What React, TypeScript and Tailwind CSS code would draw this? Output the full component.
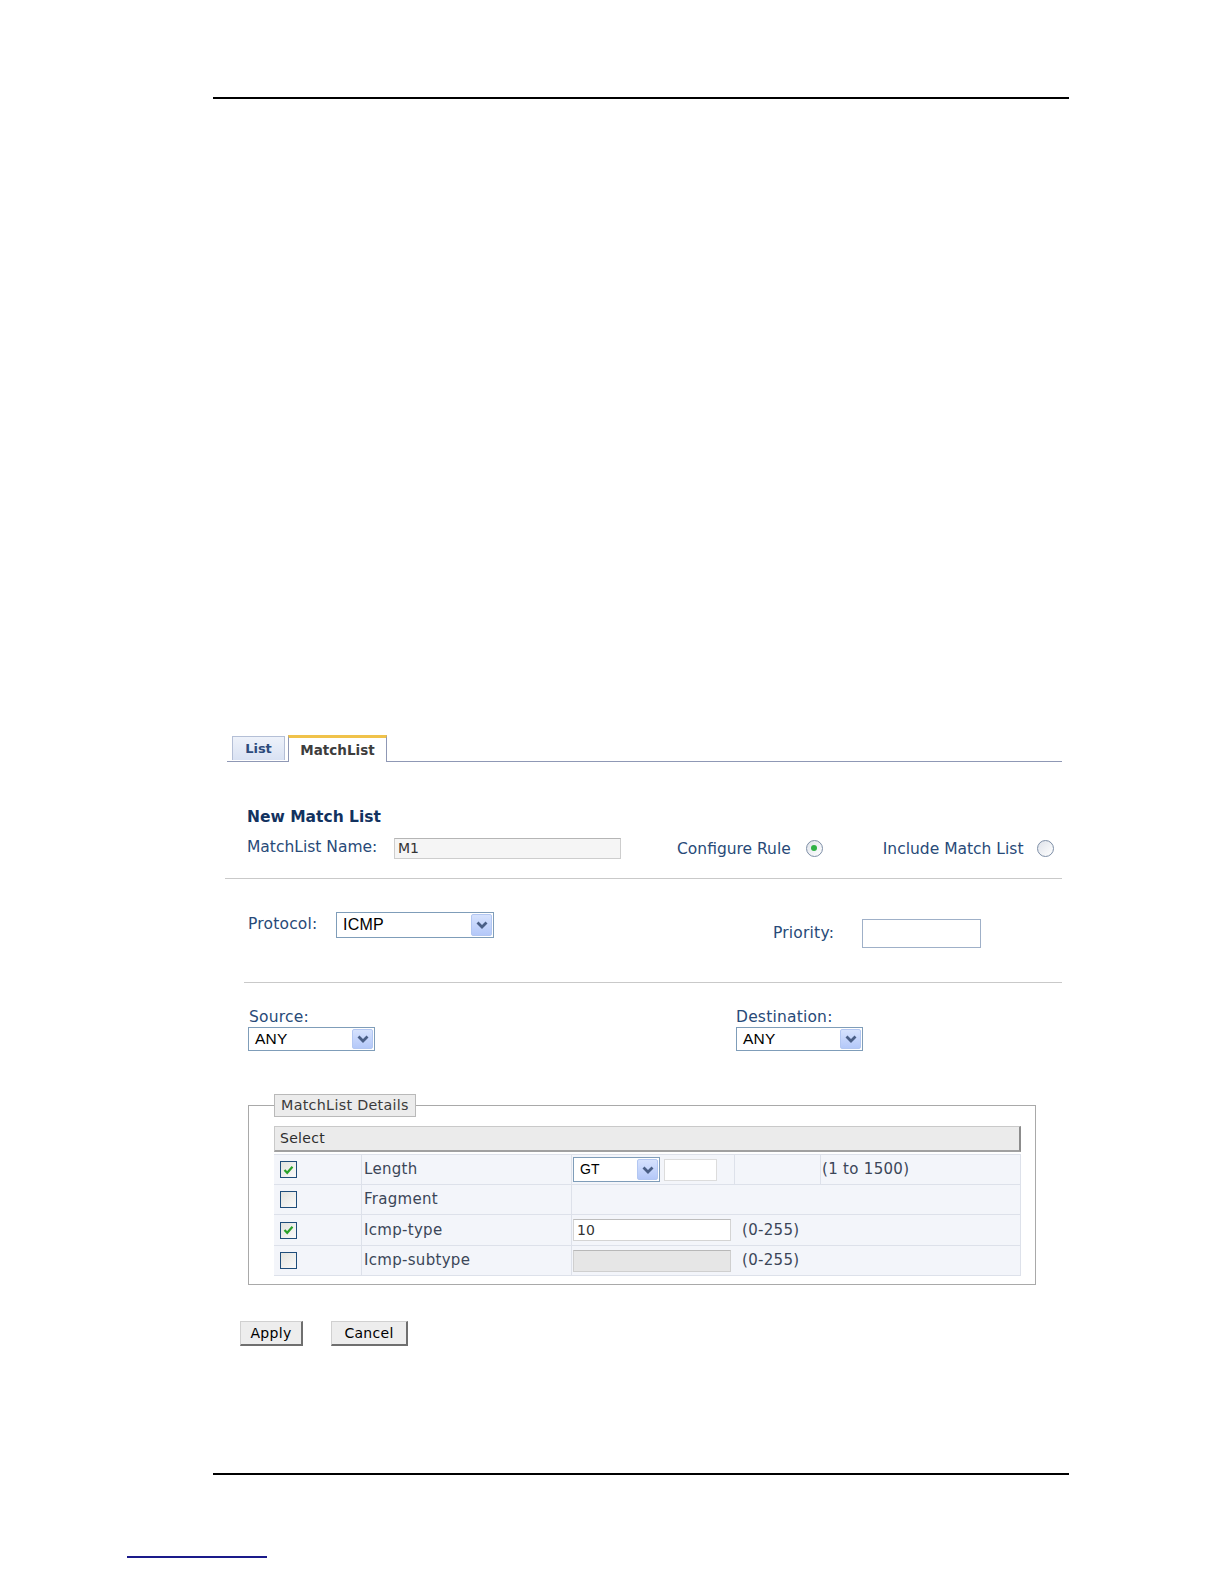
import React from "react";

const ui = "font-['DejaVu_Sans',Verdana,sans-serif]";
const arial = "font-['Liberation_Sans',Arial,sans-serif]";

function Chevron() {
  return (
    <svg width="14" height="12" viewBox="0 0 14 12">
      <path d="M2.5 3.5 L7 8 L11.5 3.5" fill="none" stroke="#4a5f86" strokeWidth="2.8" />
    </svg>
  );
}

function Dropdown({ value, className, text }: { value: string; className: string; text: string }) {
  return (
    <div className={`flex items-stretch border border-[#7f9db9] bg-white ${className}`}>
      <span className={`flex-1 flex items-center pl-[6px] text-black ${arial} ${text}`}>{value}</span>
      <span className="m-px w-[21px] flex items-center justify-center rounded-[2px] border border-[#b3c7f2] bg-gradient-to-b from-[#d6e2fd] to-[#b4c8f9]">
        <Chevron />
      </span>
    </div>
  );
}

function Radio({ on }: { on?: boolean }) {
  return (
    <span className="w-[17px] h-[17px] rounded-full border border-[#7d8ea6] bg-gradient-to-br from-[#dfe3ea] to-white flex items-center justify-center">
      {on && <span className="w-[6px] h-[6px] rounded-full bg-[#2fb145]" />}
    </span>
  );
}

function Check({ on }: { on?: boolean }) {
  return (
    <span className="w-[17px] h-[17px] border-[1.5px] border-[#1f4d7a] bg-gradient-to-br from-[#e3e3de] to-[#fafafa] flex items-center justify-center">
      {on && (
        <svg width="11" height="10" viewBox="0 0 11 10">
          <path d="M1.5 5 L4.2 7.8 L9.5 1.8" fill="none" stroke="#2aa12a" strokeWidth="2.2" />
        </svg>
      )}
    </span>
  );
}

const cell = "flex items-center";
const rowText = "text-[15px] tracking-[0.3px] text-[#3b4658]";

export default function App() {
  return (
    <div className={`w-full min-h-screen bg-white flex flex-col items-start ${ui}`}>
      <div className="mt-[97px] ml-[213px] w-[856px] h-[2px] bg-black" />

      <div className="mt-[636px] ml-[227px] w-[835px] flex flex-col">
        {/* tabs */}
        <div className="flex items-end h-[27px] border-b border-[#8f98b5]">
          <div className="ml-[5px] mb-px w-[53px] h-[24px] flex items-center justify-center border border-b-0 border-[#b4bfd6] bg-gradient-to-b from-[#eef2fa] to-[#d9e2f3] text-[13px] font-bold text-[#2c4a7c]">
            List
          </div>
          <div className="relative -mb-px ml-[3px] w-[99px] h-[27px] flex items-center justify-center border-t-[3px] border-t-[#f0c24a] border-x border-x-[#8f98b5] bg-white text-[13.5px] font-bold text-[#3d3d3d]">
            MatchList
          </div>
        </div>

        {/* name */}
        <div className="pl-[20px]">
          <div className="mt-[46px] h-[20px] flex items-center text-[15.5px] font-bold text-[#12325f]">New Match List</div>
          <div className="mt-[8px] h-[24px] flex items-center text-[15.5px] text-[#284a78]">
            <span className="w-[147px]">MatchList Name:</span>
            <div className="w-[227px] h-[21px] border border-[#cdcdcd] border-t-[#b5b5b5] bg-[#f5f5f5] flex items-center pl-[3px] text-[14px] text-[#333]">
              M1
            </div>
            <span className="ml-[56px] mt-[3px]">Configure Rule</span>
            <span className="ml-[15px]">
              <Radio on />
            </span>
            <span className="ml-[60px] mt-[3px]">Include Match List</span>
            <span className="ml-[14px]">
              <Radio />
            </span>
          </div>
        </div>
        <div className="mt-[18px] -ml-[2px] w-[837px] h-px bg-[#c9c9c9]" />

        {/* protocol */}
        <div className="mt-[33px] pl-[21px] flex items-start text-[15.5px] tracking-[0.2px] text-[#284a78]">
          <div className="w-[88px] h-[26px] flex items-center">Protocol:</div>
          <Dropdown value="ICMP" className="w-[158px] h-[26px]" text="text-[16px]" />
          <div className="ml-[279px] mt-[7px] flex items-center">
            <span className="w-[89px]">Priority:</span>
            <div className="w-[119px] h-[29px] border border-[#9fb0c8] bg-white" />
          </div>
        </div>
        <div className="mt-[34px] ml-[17px] w-[818px] h-px bg-[#c9c9c9]" />

        {/* source / destination */}
        <div className="mt-[25px] pl-[21px] flex text-[15.5px] tracking-[0.2px] text-[#284a78]">
          <div className="w-[488px] flex flex-col">
            <span className="h-[18px] leading-[18px] pl-px">Source:</span>
            <Dropdown value="ANY" className="mt-px w-[127px] h-[24px]" text="text-[15.5px]" />
          </div>
          <div className="flex flex-col">
            <span className="h-[18px] leading-[18px]">Destination:</span>
            <Dropdown value="ANY" className="mt-px w-[127px] h-[24px]" text="text-[15.5px]" />
          </div>
        </div>

        {/* details */}
        <fieldset className="mt-[43px] ml-[21px] w-[788px] min-w-0 border border-[#a9a9a9] pl-[25px] pr-[13px] pt-[9px] pb-[8px]">
          <legend className="h-[23px] px-[6px] flex items-center border border-[#b9b9b9] bg-[#ececec] text-[14.3px] tracking-[0.3px] text-[#3b3b3b]">
            MatchList Details
          </legend>
          <div className="w-[747px] flex flex-col">
            <div className="h-[26px] flex items-center pl-[5px] bg-[#ebebeb] border border-[#c9c9c9] border-r-2 border-b-2 border-r-[#8c8c8c] border-b-[#a0a0a0] text-[14px] tracking-[0.3px] text-[#2e2e2e]">
              Select
            </div>
            <div className="mt-[2px] flex flex-col bg-[#f3f5fa] border-r border-b border-[#dde1ea]">
              {/* Length */}
              <div className="h-[30px] flex border-t border-[#dde1ea]">
                <div className={`${cell} w-[88px] pl-[6px] border-r border-[#dde1ea]`}>
                  <Check on />
                </div>
                <div className={`${cell} w-[210px] pl-[2px] border-r border-[#dde1ea] ${rowText}`}>Length</div>
                <div className={`${cell} w-[163px] pl-px border-r border-[#dde1ea]`}>
                  <Dropdown value="GT" className="w-[87px] h-[25px]" text="text-[14px]" />
                  <div className="ml-[4px] w-[53px] h-[22px] border border-[#dcdcdc] bg-white" />
                </div>
                <div className="w-[86px] border-r border-[#dde1ea]" />
                <div className={`${cell} pl-px ${rowText}`}>(1 to 1500)</div>
              </div>
              {/* Fragment */}
              <div className="h-[30px] flex border-t border-[#dde1ea]">
                <div className={`${cell} w-[88px] pl-[6px] border-r border-[#dde1ea]`}>
                  <Check />
                </div>
                <div className={`${cell} w-[210px] pl-[2px] border-r border-[#dde1ea] ${rowText}`}>Fragment</div>
                <div className="flex-1" />
              </div>
              {/* Icmp-type */}
              <div className="h-[31px] flex border-t border-[#dde1ea]">
                <div className={`${cell} w-[88px] pl-[6px] border-r border-[#dde1ea]`}>
                  <Check on />
                </div>
                <div className={`${cell} w-[210px] pl-[2px] border-r border-[#dde1ea] ${rowText}`}>Icmp-type</div>
                <div className={`${cell} pl-px`}>
                  <div className="w-[158px] h-[22px] border border-[#d4d4d4] border-t-[#bdbdbd] bg-white flex items-center pl-[3px] text-[14px] text-[#333]">
                    10
                  </div>
                  <span className={`ml-[11px] ${rowText}`}>(0-255)</span>
                </div>
              </div>
              {/* Icmp-subtype */}
              <div className="h-[30px] flex border-t border-[#dde1ea]">
                <div className={`${cell} w-[88px] pl-[6px] border-r border-[#dde1ea]`}>
                  <Check />
                </div>
                <div className={`${cell} w-[210px] pl-[2px] border-r border-[#dde1ea] ${rowText}`}>Icmp-subtype</div>
                <div className={`${cell} pl-px`}>
                  <div className="w-[158px] h-[22px] border border-[#cfcfcf] border-t-[#b8b8b8] bg-[#e6e6e6]" />
                  <span className={`ml-[11px] ${rowText}`}>(0-255)</span>
                </div>
              </div>
            </div>
          </div>
        </fieldset>

        {/* buttons */}
        <div className="mt-[36px] ml-[13px] flex">
          <button className="w-[63px] h-[25px] bg-[#ededed] border border-[#d0d0d0] border-r-2 border-b-2 border-r-[#6f6f6f] border-b-[#6f6f6f] text-[14px] tracking-[0.3px] text-black">
            Apply
          </button>
          <button className="ml-[28px] w-[77px] h-[25px] bg-[#ededed] border border-[#d0d0d0] border-r-2 border-b-2 border-r-[#6f6f6f] border-b-[#6f6f6f] text-[14px] tracking-[0.3px] text-black">
            Cancel
          </button>
        </div>
      </div>

      <div className="mt-[127px] ml-[213px] w-[856px] h-[2px] bg-black" />
      <div className="mt-[81px] ml-[127px] w-[140px] h-[2px] bg-[#1a1a8a]" />
    </div>
  );
}
